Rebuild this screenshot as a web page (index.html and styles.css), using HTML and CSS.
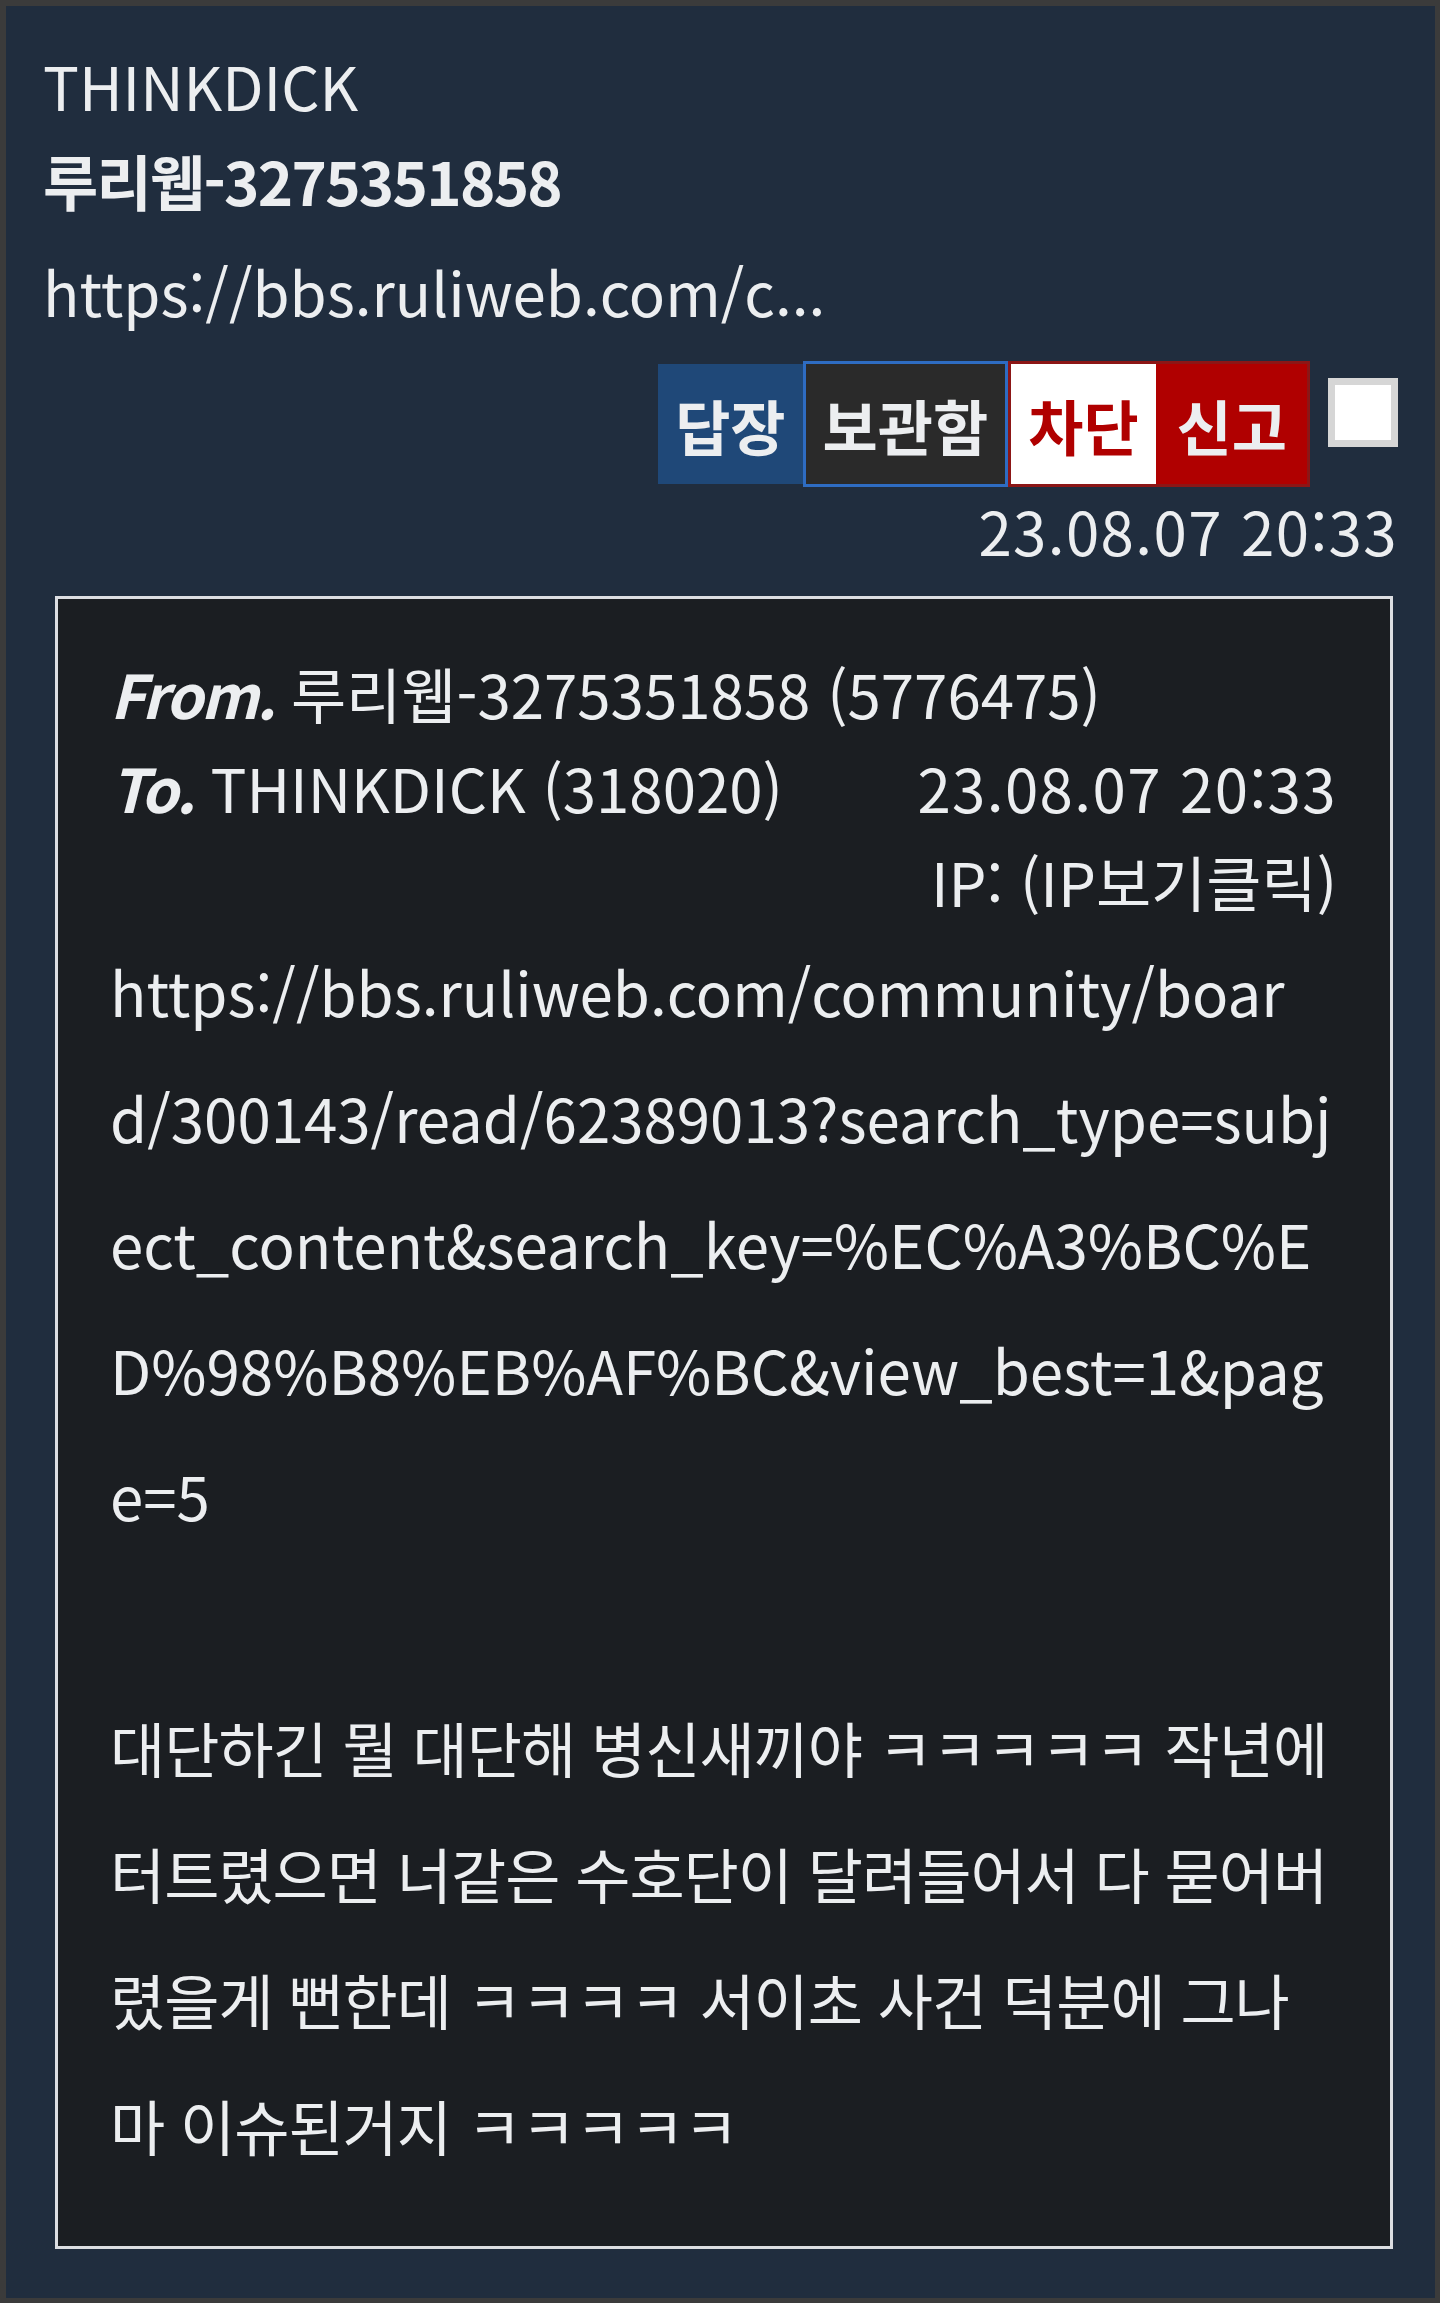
FILE: index.html
```html
<!DOCTYPE html>
<html lang="ko">
<head>
    <meta charset="UTF-8">
    <meta name="viewport" content="width=device-width, initial-scale=1.0">
    <title>쪽지</title>
    <link rel="stylesheet" href="styles.css">
</head>
<body>

    <div class="panel">
        <div class="sender">THINKDICK</div>
        <div class="nick">루리웹-3275351858</div>
        <div class="preview">https://bbs.ruliweb.com/c...</div>

        <div class="actions">
            <button class="btn btn-reply">답장</button>
            <button class="btn btn-keep">보관함</button>
            <span class="btn-group">
                <button class="btn btn-block">차단</button><button class="btn btn-report">신고</button>
            </span>
            <span class="check"></span>
        </div>
        <div class="date">23.08.07 20:33</div>

        <div class="message">
            <div class="meta">
                <div><b class="label">From.</b> 루리웹-3275351858 (5776475)</div>
                <div class="to-line">
                    <span><b class="label">To.</b> THINKDICK (318020)</span>
                    <span class="stamp">23.08.07 20:33</span>
                </div>
                <div class="ip">IP: (IP보기클릭)</div>
            </div>
            <div class="body">
                <p>https://bbs.ruliweb.com/community/board/300143/read/62389013?search_type=subject_content&amp;search_key=%EC%A3%BC%ED%98%B8%EB%AF%BC&amp;view_best=1&amp;page=5</p>
                <p>&nbsp;</p>
                <p class="ko">대단하긴 뭘 대단해 병신새끼야 ㅋㅋㅋㅋㅋ 작년에 터트렸으면 너같은 수호단이 달려들어서 다 묻어버렸을게 뻔한데 ㅋㅋㅋㅋ 서이초 사건 덕분에 그나마 이슈된거지 ㅋㅋㅋㅋㅋ</p>
            </div>
        </div>
    </div>

</body>
</html>
```

FILE: styles.css
```css
body {
    margin: 0;
    padding: 6px 5px 6px 6px;
    background-color: #3b3b3b;
    font-family: "Noto Sans CJK KR", "Noto Sans", sans-serif;
    color: #eceef0;
    font-size: 60px;
}
.panel {
    background-color: #202d3e;
    padding: 33px 37px 49px 37px;
}
.sender {
    line-height: 92px;
}
.nick {
    line-height: 92px;
    margin-top: 3px;
    font-weight: bold;
    letter-spacing: -1.7px;
}
.preview {
    line-height: 92px;
    margin-top: 19px;
}
.actions {
    display: flex;
    justify-content: flex-end;
    align-items: center;
    margin-top: 24px;
}
.btn {
    font-family: inherit;
    font-size: 60px;
    font-weight: bold;
    height: 120px;
    padding: 0 17px;
    border: none;
    border-radius: 0;
    margin: 0;
    color: #eceef0;
    cursor: pointer;
}
.btn-reply {
    background-color: #1f4878;
}
.btn-keep {
    height: 126px;
    padding: 0 17px;
    background-color: #2a2a2a;
    border: 3px solid #2e6cc2;
}
.btn-group {
    display: flex;
    border: 3px solid #8c1616;
}
.btn-block {
    background-color: #fff;
    color: #b00000;
    padding: 0 17px 0 17px;
}
.btn-report {
    background-color: #b00000;
    padding: 0 20px 0 21px;
}
.check {
    width: 56px;
    height: 55px;
    background-color: #fff;
    border: 7px solid #d6d6d6;
    margin-left: 18px;
    align-self: flex-start;
    margin-top: 17px;
}
.date {
    text-align: right;
    line-height: 86px;
    letter-spacing: 1.4px;
}
.message {
    margin: 23px 5px 0 12px;
    background-color: #1b1e22;
    border: 3px solid #dcdee2;
    padding: 47px 53px 58px 52px;
}
.meta {
    line-height: 94px;
}
.label {
    font-style: italic;
    letter-spacing: -2px;
}
.to-line {
    display: flex;
    justify-content: space-between;
}
.stamp {
    letter-spacing: 1.4px;
}
.ip {
    text-align: right;
}
.body p {
    margin: 0;
    line-height: 126px;
    word-break: break-all;
}
.body .ko {
    letter-spacing: -1px;
}
```
